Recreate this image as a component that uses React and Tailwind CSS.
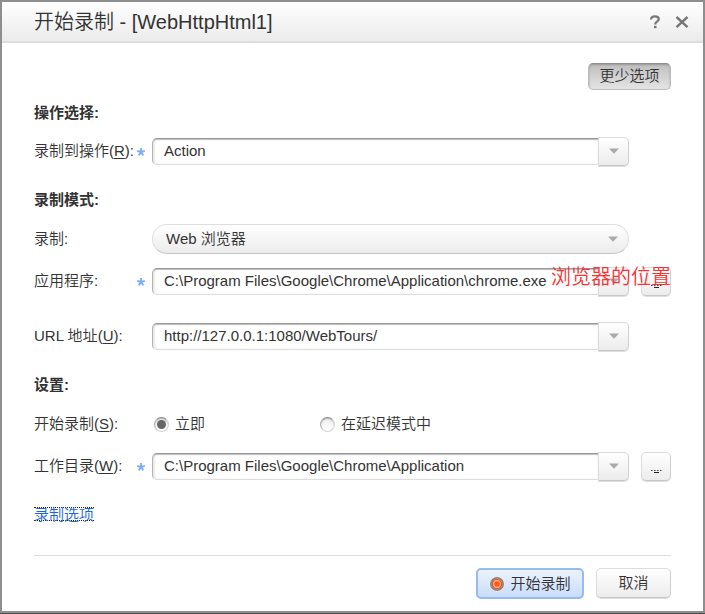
import { useState } from "react";

const FONT = "font-['Liberation_Sans','Noto_Sans_CJK_SC',sans-serif]";

const BUTTON =
  "rounded-[5px] border border-[#dcdcdc] border-b-[#c6c6c6] border-r-[#d0d0d0] bg-linear-to-b from-white to-[#ececec] shadow-[0_1px_0_#dedede]";

function Arrow() {
  return (
    <svg width="10" height="6" viewBox="0 0 10 6" aria-hidden="true">
      <path d="M0 0.5H10L5 5.8Z" fill="#aaaaaa" />
    </svg>
  );
}

function Field({ id, text, hotkey, required, children }) {
  return (
    <div className="relative flex h-[30px] items-center">
      <div className="flex w-[118px] shrink-0 items-center justify-between pr-[6px]">
        <label htmlFor={id} className="whitespace-nowrap">
          {text}
          {hotkey && (
            <>
              (<span className="underline underline-offset-2">{hotkey}</span>)
            </>
          )}
          :
        </label>
        {required && <Star />}
      </div>
      {children}
    </div>
  );
}

function Star() {
  return (
    <svg width="10" height="10" viewBox="0 0 10 10" className="mt-0.5 shrink-0" aria-hidden="true">
      <path
        d="M5 5V1M5 5L1.2 3.8M5 5L8.8 3.8M5 5L2.7 8.4M5 5L7.3 8.4"
        stroke="#7ab0fb"
        strokeWidth="1.9"
        fill="none"
      />
    </svg>
  );
}

function Combo({ id, value }) {
  const [text, setText] = useState(value);
  return (
    <div className="flex min-w-0 flex-1 items-center">
      <input
        id={id}
        type="text"
        value={text}
        onChange={(e) => setText(e.target.value)}
        className="h-[27px] min-w-0 flex-1 rounded-l-[5px] border border-r-0 border-t-[#989898] border-b-[#dedede] border-l-[#b4b4b4] bg-white pb-px pl-[11px] shadow-[inset_0_1px_1px_#bdbdbd,inset_2px_0_2px_#ececec] outline-none"
      />
      <button
        type="button"
        aria-label="▾"
        className={`flex h-[29px] w-[31px] items-center justify-center rounded-l-none ${BUTTON}`}
      >
        <Arrow />
      </button>
    </div>
  );
}

function Browse() {
  return (
    <button
      type="button"
      aria-label="..."
      className={`ml-3 flex h-[29px] w-[30px] items-end justify-center pb-[6px] ${BUTTON}`}
    >
      <svg width="12" height="5" viewBox="0 0 12 5" aria-hidden="true">
        <path d="M1 1.5H2.5M4 1.5H5.5M7 1.5H8.5M10 1.5H11.5" stroke="#3a3a4a" strokeWidth="1" />
        <path d="M4 3.5H9" stroke="#222222" strokeWidth="1" />
      </svg>
    </button>
  );
}

function Radio({ label, checked, onChange }) {
  return (
    <label className="flex items-center gap-[6px]">
      <input
        type="radio"
        name="start"
        checked={checked}
        onChange={onChange}
        className="flex size-[15px] appearance-none items-center justify-center rounded-full border border-[#d4d4d4] border-t-[#8c8c8c] border-l-[#b0b0b0] bg-linear-to-b from-[#ededed] to-white shadow-[inset_0_1px_1px_#bbbbbb] before:size-[9px] before:rounded-full before:content-[''] checked:before:bg-[#666666]"
      />
      {label}
    </label>
  );
}

function Heading({ children }) {
  return <h2 className="h-[22px] font-bold leading-[22px]">{children}</h2>;
}

export default function App() {
  const [mode, setMode] = useState("now");
  return (
    <main className={`border-b border-[#4c4c4c] text-[15px] leading-[22px] text-[#333333] ${FONT}`}>
      <div className="border-2 border-[#8e8e8e] bg-white">
        <header className="flex h-[41px] items-center justify-between border-b-2 border-[#dddddd] bg-linear-to-b from-white to-[#ebebeb] pl-8 pr-[14px]">
          <h1 className="text-xl font-[350]">开始录制 - [WebHttpHtml1]</h1>
          <div className="flex items-center gap-[14px]">
            <button type="button" aria-label="?">
              <svg width="12" height="14" viewBox="0 0 12 14" fill="none">
                <path
                  d="M2 4.6C2 2.4 3.5 1.3 5.9 1.3C8.3 1.3 9.8 2.3 9.8 4.2C9.8 6.4 6.2 6.3 6.2 9.4"
                  stroke="#777777"
                  strokeWidth="2.2"
                />
                <path d="M5 10.8H7.5V13.2H5Z" fill="#777777" />
              </svg>
            </button>
            <button type="button" aria-label="×">
              <svg width="14" height="14" viewBox="0 0 14 14" fill="none">
                <path d="M1.5 2L12.5 12.2M12.5 2L1.5 12.2" stroke="#777777" strokeWidth="2.4" />
              </svg>
            </button>
          </div>
        </header>

        <form className="px-8 pt-5 pb-3 font-[350]" onSubmit={(e) => e.preventDefault()}>
          <div className="flex justify-end">
            <button
              type="button"
              className="h-[27px] w-[83px] rounded-[5px] border border-[#bdbdbd] border-t-[#8e8e8e] bg-linear-to-b from-[#bfbfbf] to-[#e4e4e4] pb-px leading-6 shadow-[inset_0_1px_2px_#999999]"
            >
              更少选项
            </button>
          </div>

          <div className="mt-3">
            <Heading>操作选择:</Heading>
            <div className="mt-3">
              <Field id="action" text="录制到操作" hotkey="R" required>
                <Combo id="action" value="Action" />
                <div className="w-[42px]" />
              </Field>
            </div>
          </div>

          <div className="mt-[23px]">
            <Heading>录制模式:</Heading>
            <div className="mt-[13px] flex flex-col gap-3">
              <Field id="record" text="录制">
                <div className="relative mr-[42px] flex-1">
                  <select
                    id="record"
                    className="block h-[30px] w-full appearance-none rounded-full border border-[#dedede] border-b-[#c4c4c4] bg-linear-to-b from-white to-[#ececec] pl-[13px] outline-none"
                  >
                    <option>Web 浏览器</option>
                  </select>
                  <span className="pointer-events-none absolute inset-y-0 right-[11px] flex items-center">
                    <Arrow />
                  </span>
                </div>
              </Field>
              <Field id="app" text="应用程序" required>
                <Combo id="app" value="C:\Program Files\Google\Chrome\Application\chrome.exe" />
                <Browse />
                <span className="pointer-events-none absolute right-0 top-0 text-xl font-[350] leading-[22px] text-[#fa3234]">
                  浏览器的位置
                </span>
              </Field>
            </div>
            <div className="mt-[25px]">
              <Field id="url" text="URL 地址" hotkey="U">
                <Combo id="url" value="http://127.0.0.1:1080/WebTours/" />
                <div className="w-[42px]" />
              </Field>
            </div>
          </div>

          <div className="mt-[23px]">
            <Heading>设置:</Heading>
            <div className="mt-[13px] flex flex-col gap-3">
              <div role="radiogroup" aria-labelledby="start" className="flex h-[30px] items-center">
                <span id="start" className="w-[120px]">
                  开始录制(<span className="underline underline-offset-2">S</span>):
                </span>
                <div className="w-[166px]">
                  <Radio label="立即" checked={mode === "now"} onChange={() => setMode("now")} />
                </div>
                <Radio label="在延迟模式中" checked={mode === "delay"} onChange={() => setMode("delay")} />
              </div>
              <Field id="dir" text="工作目录" hotkey="W" required>
                <Combo id="dir" value="C:\Program Files\Google\Chrome\Application" />
                <Browse />
              </Field>
            </div>
          </div>

          <a
            href="#options"
            className="mt-[26px] block h-[14px] w-fit border-y border-dotted border-[#222222] leading-[14px] text-[#1c66da]"
          >
            录制选项
          </a>

          <footer className="mt-[34px] flex justify-end gap-3 border-t border-[#dedede] pt-3">
            <button
              type="submit"
              className="flex h-[31px] w-[108px] items-center justify-center gap-[5px] rounded-[5px] border-2 border-[#96bbf0] bg-linear-to-b from-[#edf3fe] to-[#c8dcfa]"
            >
              <svg width="16" height="16" viewBox="0 0 16 16" aria-hidden="true">
                <circle cx="8" cy="8" r="7.8" fill="#eeeeee" />
                <circle cx="8" cy="8" r="6.2" fill="#bcb2ac" stroke="#8b8580" strokeWidth="1.6" />
                <circle cx="8" cy="8" r="4.6" fill="#ffb393" stroke="#e95a26" strokeWidth="1.4" />
                <circle cx="8" cy="8" r="2.8" fill="#ff5a1c" />
              </svg>
              开始录制
            </button>
            <button type="button" className={`h-[30px] w-[75px] ${BUTTON}`}>
              取消
            </button>
          </footer>
        </form>
      </div>
    </main>
  );
}
